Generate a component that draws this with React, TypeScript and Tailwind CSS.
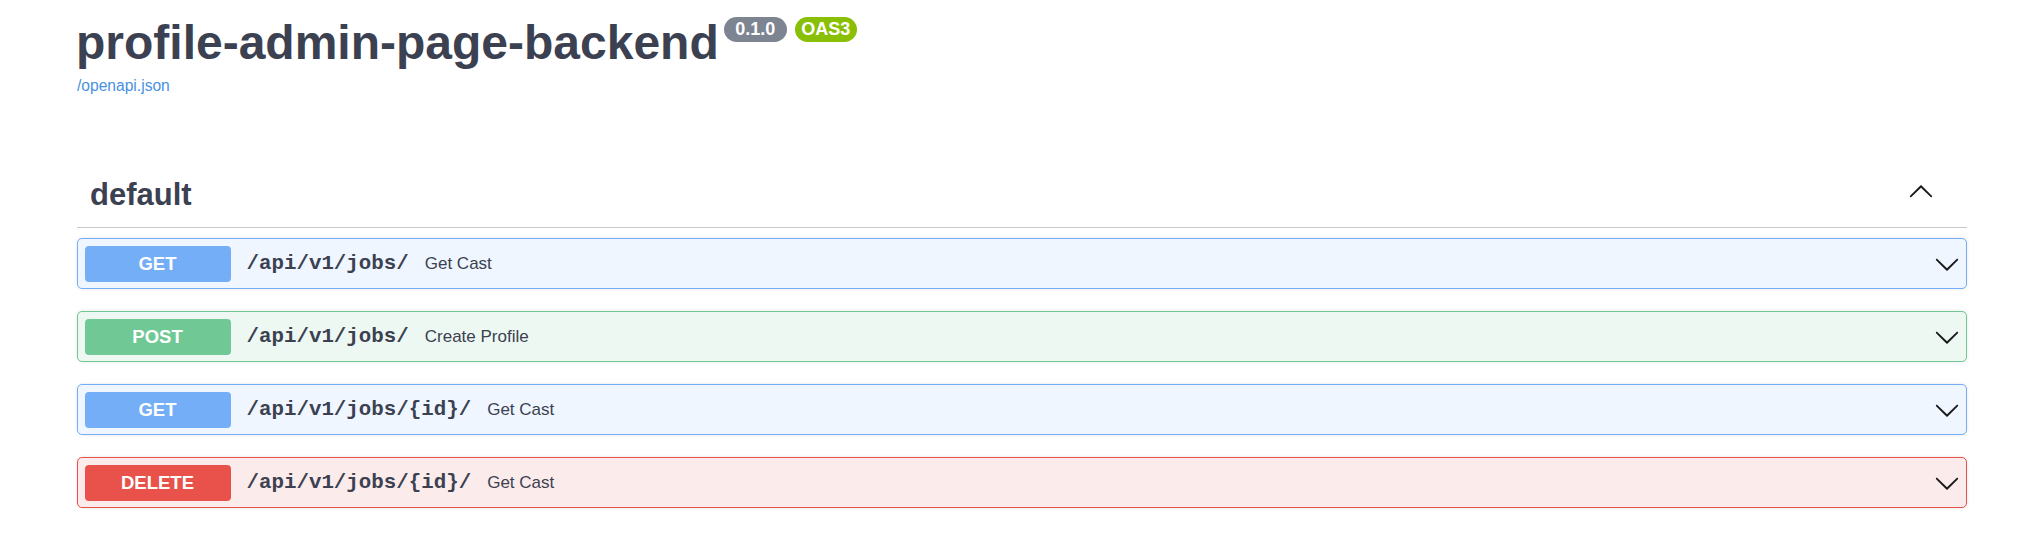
import React from 'react';

type Op = { method: string; path: string; summary: string; badge: string; border: string; bg: string };

const ops: Op[] = [
    { method: 'GET', path: '/api/v1/jobs/', summary: 'Get Cast', badge: 'bg-[#74aef6]', border: 'border-[#74aef6]', bg: 'bg-[#eff6ff]' },
    { method: 'POST', path: '/api/v1/jobs/', summary: 'Create Profile', badge: 'bg-[#70c895]', border: 'border-[#70c895]', bg: 'bg-[#eef8f2]' },
    { method: 'GET', path: '/api/v1/jobs/{id}/', summary: 'Get Cast', badge: 'bg-[#74aef6]', border: 'border-[#74aef6]', bg: 'bg-[#eff6ff]' },
    { method: 'DELETE', path: '/api/v1/jobs/{id}/', summary: 'Get Cast', badge: 'bg-[#e8524a]', border: 'border-[#e8524a]', bg: 'bg-[#fcebeb]' },
];

// swagger-style chevron, filled path
const Chevron = ({ up = false }: { up?: boolean }) => (
    <svg width="26" height="26" viewBox="0 0 20 20" className={up ? 'rotate-180' : ''} fill="#1a1a1a">
        <path d="M17.418 6.109c.272-.268.709-.268.979 0s.271.701 0 .969l-7.908 7.83c-.27.268-.707.268-.979 0l-7.908-7.83c-.27-.268-.27-.701 0-.969.271-.268.709-.268.979 0L10 13.25l7.418-7.141z" />
    </svg>
);

export default function App() {
    return (
        <div className="min-h-[556px] bg-white font-['Liberation_Sans',Arial,sans-serif] text-[#3b4151]">
            <div className="ml-[77px] mr-[63px]">
                {/* Info header */}
                <div className="pt-[15px]">
                    <div className="flex items-start">
                        <h2 className="text-[48px] leading-[56px] font-bold -ml-[1px]">profile-admin-page-backend</h2>
                        <div className="flex gap-[8px] mt-[2px] ml-[5px]">
                            <span className="w-[63px] h-[25px] rounded-full bg-[#7d8492] text-white text-[18px] leading-[25px] font-bold text-center">0.1.0</span>
                            <span className="w-[62px] h-[25px] rounded-full bg-[#89bf04] text-white text-[18px] leading-[25px] font-bold text-center">OAS3</span>
                        </div>
                    </div>
                    <a className="block mt-[5px] text-[15.6px] leading-[20px] text-[#4990e2]">/openapi.json</a>
                </div>

                {/* Tag section */}
                <div className="mt-[72px]">
                    <div className="flex items-start justify-between border-b border-[#c5c7cc] pl-[13px] pr-[33px] pt-[7px] pb-[12px]">
                        <h3 className="text-[31px] leading-[40px] font-bold">default</h3>
                        <div className="mt-[4px]">
                            <Chevron up />
                        </div>
                    </div>

                    <div className="mt-[10px] flex flex-col gap-[22px]">
                        {ops.map((op, i) => (
                            <div key={i} className={`flex items-center border ${op.border} ${op.bg} rounded-[5px] p-[6.5px] shadow-[0_0_3px_rgba(0,0,0,0.12)]`}>
                                <span className={`w-[146px] h-[36px] rounded-[4px] ${op.badge} text-white text-[18.5px] font-bold leading-[36px] text-center`}>
                                    {op.method}
                                </span>
                                <span className="pl-[16px] pr-[16px] font-['Liberation_Mono','Courier_New',monospace] font-bold text-[20.8px] leading-[36px]">
                                    {op.path}
                                </span>
                                <span className="text-[17px] leading-[36px] flex-1">{op.summary}</span>
                                <Chevron />
                            </div>
                        ))}
                    </div>
                </div>
            </div>
        </div>
    );
}
